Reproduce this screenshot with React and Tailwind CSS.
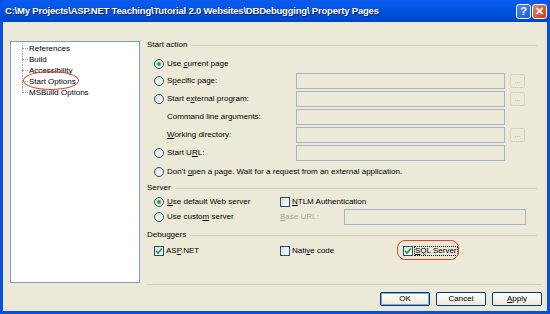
import React from 'react';

const font = { fontFamily: '"Liberation Sans", Arial, sans-serif' };

const Radio = ({ checked }) => (
  <span className="w-[10px] h-[10px] rounded-full border border-[#1c5180] bg-gradient-to-br from-[#dcdcd6] to-white flex items-center justify-center shrink-0">
    {checked && <span className="w-[4px] h-[4px] rounded-full bg-[#2fa82f]" />}
  </span>
);

const Check = ({ checked }) => (
  <span className="w-[10px] h-[10px] border border-[#1c5180] bg-gradient-to-br from-[#dcdcd6] to-white flex items-center justify-center shrink-0">
    {checked && (
      <svg width="8" height="8" viewBox="0 0 8 8">
        <path d="M1 4 L3 6 L7 1.5" fill="none" stroke="#21a121" strokeWidth="1.6" />
      </svg>
    )}
  </span>
);

const Box = ({ className = '' }) => (
  <div className={`h-[16px] border border-[#a5b5c8] bg-[#ece9d8] ${className}`} />
);

const Dots = () => (
  <div className="w-[15px] h-[14px] rounded-[2px] border border-[#d6d3c4] text-[#aca899] text-[8px] leading-[10px] flex items-center justify-center">...</div>
);

const Group = ({ label }) => (
  <div className="flex items-center h-[10px] gap-[4px] pr-[10px]">
    <span className="text-black">{label}</span>
    <div className="flex-1 h-0 border-t border-[#d0d0bf]" />
  </div>
);

const Btn = ({ children, main }) => (
  <div className={`w-[50px] h-[14px] rounded-[2px] border border-[#003c74] bg-gradient-to-b from-white to-[#ece9d8] flex items-center justify-center text-black ${main ? 'shadow-[inset_0_0_0_1px_#84a6e8]' : ''}`}>
    {children}
  </div>
);

const TreeItem = ({ label, last, circled }) => (
  <div className="relative flex items-center h-[11px]">
    <div className="absolute left-[11px] top-0 h-full border-l border-dotted border-[#a0a0a0]" style={last ? { height: 6 } : undefined} />
    <div className="w-[6px] ml-[11px] border-t border-dotted border-[#a0a0a0]" />
    <span className="ml-[1px] text-black">{label}</span>
    {circled && <div className="absolute left-[12px] top-[-5px] w-[56px] h-[19px] rounded-[50%] border border-[#d8482a]" />}
  </div>
);

export default function App() {
  return (
    <div className="w-[550px] h-[314px] bg-[#0a4fd8] flex flex-col text-[8px] leading-none" style={font}>
      {/* Title bar */}
      <div className="h-[22px] flex items-center pl-[5px] pr-[3px] bg-gradient-to-b from-[#0a5cf0] via-[#0053e0] to-[#0046c8] rounded-t-[6px]">
        <span className="flex-1 text-white font-bold text-[9.5px] tracking-[-0.2px] whitespace-nowrap" style={{ textShadow: '1px 1px 0 #0a1e6e' }}>
          C:\My Projects\ASP.NET Teaching\Tutorial 2.0 Websites\DBDebugging\ Property Pages
        </span>
        <div className="flex gap-[1px]">
          <div className="w-[15px] h-[15px] rounded-[3px] border border-white bg-gradient-to-br from-[#4f8af5] to-[#1b58d8] text-white text-[11px] font-bold flex items-center justify-center">?</div>
          <div className="w-[15px] h-[15px] rounded-[3px] border border-white bg-gradient-to-br from-[#e9835f] to-[#c8391b] text-white text-[11px] font-bold flex items-center justify-center">✕</div>
        </div>
      </div>

      {/* Body */}
      <div className="flex-1 mx-[3px] mb-[3px] bg-[#ece9d8] flex flex-col">
        <div className="flex pt-[19px] pl-[7px]">
          {/* Tree */}
          <div className="w-[130px] h-[242px] bg-white border border-[#7f9db9] pt-[1px]">
            <TreeItem label="References" />
            <TreeItem label="Build" />
            <TreeItem label="Accessibility" />
            <TreeItem label="Start Options" circled />
            <TreeItem label="MSBuild Options" last />
          </div>

          {/* Right side */}
          <div className="flex-1 ml-[7px] flex flex-col">
            <div className="-mt-[1px]"><Group label="Start action" /></div>
            <div className="pl-[7px] mt-[5px] flex flex-col">
              <div className="flex items-center gap-[3px] h-[17px]"><Radio checked /><span>Use <u>c</u>urrent page</span></div>
              {[
                ['radio', <>S<u>p</u>ecific page:</>, true],
                ['radio', <>Start e<u>x</u>ternal program:</>, true],
                ['none', <>Command line arguments:</>, false],
                ['none', <><u>W</u>orking directory:</>, true],
                ['radio', <>Start U<u>R</u>L:</>, false],
              ].map(([kind, label, dots], i) => (
                <div key={i} className="flex items-center h-[18px]">
                  <div className="w-[142px] flex items-center gap-[3px]">
                    {kind === 'radio' ? <Radio /> : <span className="w-[10px]" />}
                    <span>{label}</span>
                  </div>
                  <Box className="w-[209px]" />
                  <div className="ml-[5px]">{dots && <Dots />}</div>
                </div>
              ))}
              <div className="flex items-center gap-[3px] h-[16px] mt-[2px]"><Radio /><span>Don't <u>o</u>pen a page. Wait for a request from an external application.</span></div>
            </div>

            <div className="mt-[3px]"><Group label="Server" /></div>
            <div className="pl-[7px] mt-[1px] flex flex-col">
              <div className="flex items-center h-[15px]">
                <div className="w-[126px] flex items-center gap-[3px]"><Radio checked /><span><u>U</u>se default Web server</span></div>
                <div className="flex items-center gap-[2px]"><Check /><span><u>N</u>TLM Authentication</span></div>
              </div>
              <div className="flex items-center h-[15px]">
                <div className="w-[126px] flex items-center gap-[3px]"><Radio /><span>Use custo<u>m</u> server</span></div>
                <span className="w-[64px] text-[#aca899]"><u>B</u>ase URL:</span>
                <Box className="w-[182px]" />
              </div>
            </div>

            <div className="mt-[6px]"><Group label="Debuggers" /></div>
            <div className="pl-[7px] mt-[4px] flex items-center h-[14px]">
              <div className="w-[126px] flex items-center gap-[2px]"><Check checked /><span>AS<u>P</u>.NET</span></div>
              <div className="w-[123px] flex items-center gap-[2px]"><Check /><span>Nati<u>v</u>e code</span></div>
              <div className="relative flex items-center gap-[2px]">
                <Check checked />
                <span className="outline outline-1 outline-dotted outline-black"><u>S</u>QL Server</span>
                <div className="absolute left-[-6px] top-[-6px] w-[62px] h-[20px] rounded-[8px] border border-[#d8482a]" />
              </div>
            </div>
          </div>
        </div>

        {/* Bottom */}
        <div className="ml-[144px] mr-[5px] mt-[1px] border-t border-[#d0d0bf]" />
        <div className="flex justify-end gap-[6px] pr-[5px] mt-[7px]">
          <Btn main>OK</Btn>
          <Btn>Cancel</Btn>
          <Btn><u>A</u>pply</Btn>
        </div>
      </div>
    </div>
  );
}
